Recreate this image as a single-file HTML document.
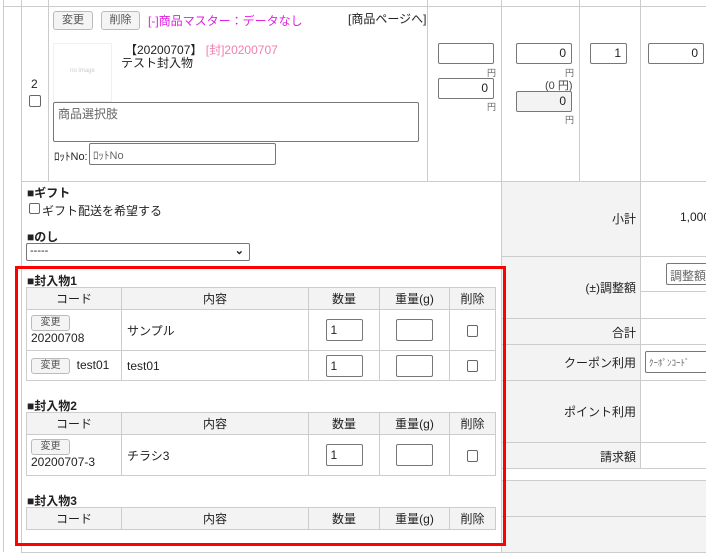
<!DOCTYPE html>
<html><head><meta charset="utf-8"><style>
*{box-sizing:border-box;margin:0;padding:0}
body{width:706px;height:558px;overflow:hidden;background:#fff;font-family:"Liberation Sans","Noto Sans CJK JP",sans-serif;font-size:12px;color:#222;position:relative}
.a{position:absolute}
.h{position:absolute;height:1px;background:#ccc}
.v{position:absolute;width:1px;background:#ccc}
.btn{position:absolute;height:19px;border:1px solid #bbb;border-radius:3px;background:#f4f4f4;color:#555;font-size:11px;text-align:center;line-height:17px}
.inp{position:absolute;border:1px solid #777;border-radius:2px;background:#fff;text-align:right;padding-right:5px;font-size:12px;line-height:19px}
.yen{position:absolute;font-size:9px;color:#666}
.cb{position:absolute;width:11px;height:11px;border:1px solid #666;border-radius:2px;background:#fff}
.gray{position:absolute;background:#f2f3f2}
.lbl{position:absolute;left:502px;width:134px;text-align:right}
table{position:absolute;border-collapse:collapse;left:26px;width:470px}
td,th{border:1px solid #ccc;font-weight:normal;font-size:12px}
th{background:#f2f3f2;height:22px;text-align:center}
.t{font-weight:bold;position:absolute;left:27px}
</style></head><body>
<div class="v" style="left:3px;top:0;height:552px"></div>
<div class="v" style="left:21px;top:0;height:552px"></div>
<div class="v" style="left:48px;top:0;height:181px"></div>
<div class="v" style="left:427px;top:0;height:181px"></div>
<div class="v" style="left:501px;top:0;height:552px"></div>
<div class="v" style="left:579px;top:0;height:181px"></div>
<div class="v" style="left:640px;top:0;height:181px"></div>
<div class="h" style="left:3px;top:6px;width:703px"></div>
<div class="h" style="left:21px;top:181px;width:685px"></div>

<div class="a" style="left:31px;top:77px">2</div>
<div class="cb" style="left:29px;top:95px;width:12px;height:12px"></div>
<div class="btn" style="left:53px;top:11px;width:40px">変更</div>
<div class="btn" style="left:101px;top:11px;width:39px">削除</div>
<div class="a" style="left:148px;top:12px;color:#e020e0">[-]商品マスター：データなし</div>
<div class="a" style="left:348px;top:10px">[商品ページへ]</div>
<div class="a" style="left:53px;top:43px;width:59px;height:59px;border:1px solid #f0f0f0;color:#ccc;font-size:6px;text-align:center;padding-top:24px">no image</div>
<div class="a" style="left:125px;top:41px">【20200707】 <span style="color:#f080b0">[封]20200707</span></div>
<div class="a" style="left:121px;top:54px">テスト封入物</div>
<div class="a" style="left:53px;top:102px;width:366px;height:40px;border:1px solid #777;border-radius:2px;color:#666;padding:2px 4px">商品選択肢</div>
<div class="a" style="left:54px;top:148px;font-size:11px">ﾛｯﾄNo:</div>
<div class="a" style="left:89px;top:143px;width:187px;height:22px;border:1px solid #777;border-radius:2px;color:#666;padding:3px 3px;font-size:11px">ﾛｯﾄNo</div>

<div class="inp" style="left:438px;top:43px;width:56px;height:21px"></div>
<div class="yen" style="left:487px;top:66px">円</div>
<div class="inp" style="left:438px;top:78px;width:56px;height:21px">0</div>
<div class="yen" style="left:487px;top:100px">円</div>
<div class="inp" style="left:516px;top:43px;width:56px;height:21px">0</div>
<div class="yen" style="left:565px;top:66px">円</div>
<div class="a" style="left:545px;top:77px;font-size:11px;color:#444">(0 円)</div>
<div class="inp" style="left:516px;top:91px;width:56px;height:21px;background:#f2f3f2">0</div>
<div class="yen" style="left:565px;top:113px">円</div>
<div class="inp" style="left:590px;top:43px;width:37px;height:21px">1</div>
<div class="inp" style="left:648px;top:43px;width:56px;height:21px">0</div>

<div class="gray" style="left:502px;top:182px;width:138px;height:286px"></div>
<div class="v" style="left:640px;top:181px;height:288px"></div>
<div class="h" style="left:501px;top:256px;width:205px"></div>
<div class="h" style="left:641px;top:291px;width:65px"></div>
<div class="h" style="left:501px;top:318px;width:205px"></div>
<div class="h" style="left:501px;top:344px;width:205px"></div>
<div class="h" style="left:501px;top:380px;width:205px"></div>
<div class="h" style="left:501px;top:442px;width:205px"></div>
<div class="h" style="left:501px;top:468px;width:205px"></div>
<div class="gray" style="left:502px;top:481px;width:204px;height:71px"></div>
<div class="h" style="left:501px;top:480px;width:205px"></div>
<div class="h" style="left:501px;top:516px;width:205px"></div>
<div class="h" style="left:21px;top:552px;width:685px"></div>
<div class="lbl" style="top:210px">小計</div>
<div class="a" style="left:680px;top:210px">1,000</div>
<div class="a" style="left:666px;top:263px;width:50px;height:22px;border:1px solid #777;border-radius:2px;color:#666;padding:3px 3px;white-space:nowrap;overflow:hidden">調整額の</div>
<div class="lbl" style="top:279px">(±)調整額</div>
<div class="lbl" style="top:324px">合計</div>
<div class="lbl" style="top:354px">クーポン利用</div>
<div class="a" style="left:645px;top:351px;width:70px;height:22px;border:1px solid #777;border-radius:2px;color:#666;padding:4px 3px;font-size:9px;white-space:nowrap;overflow:hidden">ｸｰﾎﾟﾝｺｰﾄﾞ</div>
<div class="lbl" style="top:403px">ポイント利用</div>
<div class="lbl" style="top:448px">請求額</div>

<div class="t" style="top:184px">■ギフト</div>
<div class="cb" style="left:29px;top:203px;width:11px;height:11px"></div>
<div class="a" style="left:42px;top:202px">ギフト配送を希望する</div>
<div class="t" style="top:228px">■のし</div>
<div class="a" style="left:26px;top:243px;width:224px;height:18px;border:1px solid #777;border-radius:2px;padding:1px 3px;font-size:11px">-----<span style="position:absolute;right:5px;top:0;font-weight:bold">⌄</span></div>

<div class="a" style="left:15px;top:266px;width:491px;height:280px;border:3px solid #f00"></div>
<div class="t" style="top:272px">■封入物1</div>
<table style="top:287px">
<tr><th style="width:95px">コード</th><th style="width:187px">内容</th><th style="width:71px">数量</th><th style="width:70px">重量(g)</th><th>削除</th></tr>
<tr style="height:41px"><td style="padding-left:4px;vertical-align:top;padding-top:5px"><div style="width:39px;height:16px;border:1px solid #bbb;border-radius:3px;background:#f4f4f4;font-size:10px;color:#555;text-align:center;line-height:14px">変更</div>20200708</td><td style="padding-left:5px">サンプル</td><td style="text-align:center"><div style="display:inline-block;width:37px;height:22px;border:1px solid #777;border-radius:2px;text-align:left;padding:3px 4px;vertical-align:middle">1</div></td><td style="text-align:center"><div style="display:inline-block;width:37px;height:22px;border:1px solid #777;border-radius:2px;vertical-align:middle"></div></td><td style="text-align:center"><div style="display:inline-block;width:11px;height:12px;border:1px solid #666;border-radius:2px;vertical-align:middle"></div></td></tr>
<tr style="height:30px"><td style="padding-left:4px"><div style="display:inline-block;width:39px;height:16px;border:1px solid #bbb;border-radius:3px;background:#f4f4f4;font-size:10px;color:#555;text-align:center;line-height:14px;vertical-align:middle">変更</div>&nbsp; test01</td><td style="padding-left:5px">test01</td><td style="text-align:center"><div style="display:inline-block;width:37px;height:22px;border:1px solid #777;border-radius:2px;text-align:left;padding:3px 4px;vertical-align:middle">1</div></td><td style="text-align:center"><div style="display:inline-block;width:37px;height:22px;border:1px solid #777;border-radius:2px;vertical-align:middle"></div></td><td style="text-align:center"><div style="display:inline-block;width:11px;height:12px;border:1px solid #666;border-radius:2px;vertical-align:middle"></div></td></tr>
</table>
<div class="t" style="top:397px">■封入物2</div>
<table style="top:412px">
<tr><th style="width:95px">コード</th><th style="width:187px">内容</th><th style="width:71px">数量</th><th style="width:70px">重量(g)</th><th>削除</th></tr>
<tr style="height:41px"><td style="padding-left:4px;vertical-align:top;padding-top:4px"><div style="width:39px;height:16px;border:1px solid #bbb;border-radius:3px;background:#f4f4f4;font-size:10px;color:#555;text-align:center;line-height:14px">変更</div>20200707-3</td><td style="padding-left:5px">チラシ3</td><td style="text-align:center"><div style="display:inline-block;width:37px;height:22px;border:1px solid #777;border-radius:2px;text-align:left;padding:3px 4px;vertical-align:middle">1</div></td><td style="text-align:center"><div style="display:inline-block;width:37px;height:22px;border:1px solid #777;border-radius:2px;vertical-align:middle"></div></td><td style="text-align:center"><div style="display:inline-block;width:11px;height:12px;border:1px solid #666;border-radius:2px;vertical-align:middle"></div></td></tr>
</table>
<div class="t" style="top:492px">■封入物3</div>
<table style="top:507px">
<tr><th style="width:95px">コード</th><th style="width:187px">内容</th><th style="width:71px">数量</th><th style="width:70px">重量(g)</th><th>削除</th></tr>
</table>
</body></html>
